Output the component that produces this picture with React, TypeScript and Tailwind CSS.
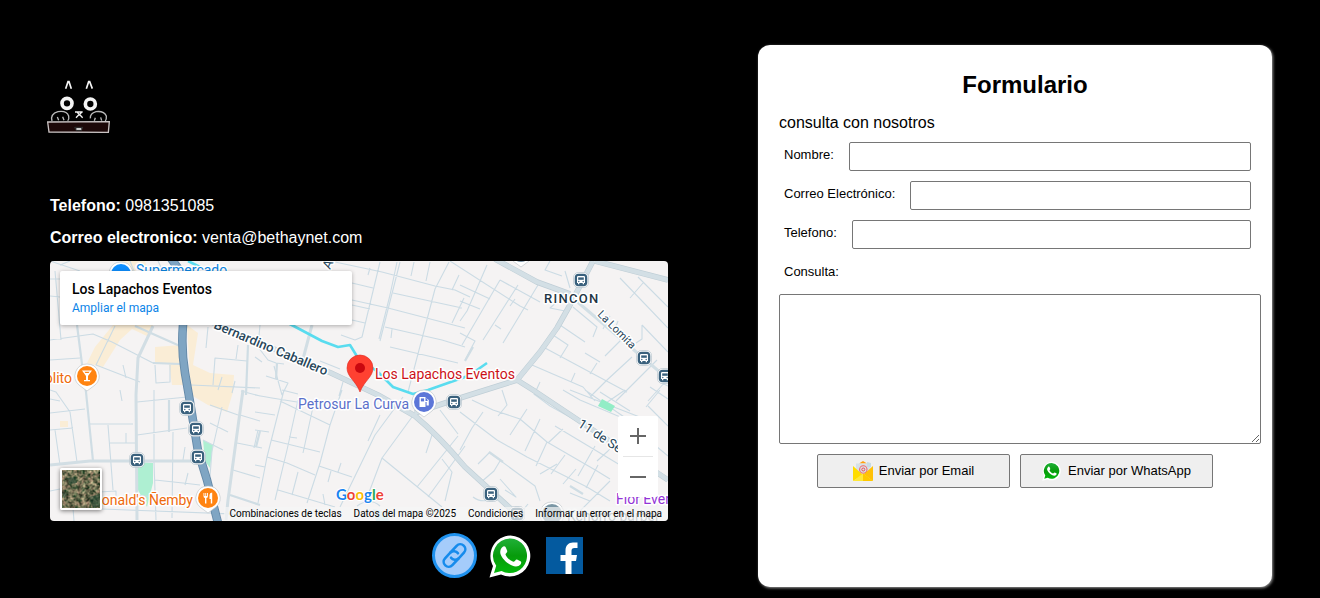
import React, { useState } from 'react';

interface Punto {
  x: number;
  y: number;
}

const PARADAS: Punto[] = [
  { x: 531, y: 19 },
  { x: 594, y: 97 },
  { x: 615, y: 115 },
  { x: 404, y: 141 },
  { x: 137, y: 147 },
  { x: 146, y: 168 },
  { x: 148, y: 196 },
  { x: 87, y: 199 },
  { x: 441, y: 233 },
  { x: 467, y: 253 },
];

const CALLES = [
  // oeste
  'M0 35L10 36M5 10L11 79M0 18H10M0 79L43 73L62 81L103 102L131 103M30 97L0 99M65 65L46 104L90 121M105 104L106 122L120 121V104M73 104L76 117',
  'M163 124L165 97L197 100M141 124L210 127M158 66L156 87M172 116L168 129M185 120L182 132M188 84L186 98M10 4L20 0M0 0L30 10M108 0L113 10M80 0L84 10',
  'M0 152L35 148M5 169L10 204M20 151L27 201M0 169L23 167M40 163H83M58 164L63 229M60 182H85M76 172V182M0 129L6 131L20 151M0 138L10 140',
  'M87 141L137 136M104 129V201L106 259M87 174L137 167M123 171L122 257M135 186L133 199M105 219L133 222L150 224M138 212L135 224M52 248L210 254M33 232L66 230V240',
  'M160 144L188 154M160 162L178 171M153 179L173 189M172 146L162 190L160 215M190 154L210 160M187 182L212 187M183 209L210 217M191 130L210 135M208 169L204 187',
  'M0 230L20 226M20 208L24 260M87 234L104 236M70 129L72 140',
  // centro
  'M285 1L332 11L385 25L405 29L420 36M330 1L312 76L305 79L291 74M350 1L330 80M347 1L340 34L329 78M364 1L361 15M380 1L376 20M399 1L385 28L358 131M302 22L323 27',
  'M302 39L338 47L415 67M302 44L320 48M302 59L315 62M343 32L412 47M335 66L392 79L415 86M340 86L408 102M414 37L402 62M409 14L402 29M342 68L341 77M320 7L318 14',
  'M210 64L208 86L218 99L226 102L234 103M216 115L238 122L232 134M224 105L232 134M232 129L248 133M205 96L212 101M293 121L289 135M270 100L290 108',
  'M234 129L217 196L208 242M248 139L237 189L225 239M263 146L253 192M292 129L280 164L270 202L257 242M330 154L318 180M353 136L325 174L290 246M362 156L332 197L315 242',
  'M205 134L222 137L247 141M205 151L225 154M230 140L280 164M205 169L219 171M221 179L270 191M269 205L302 216M217 196L237 202L265 214M205 204L215 206M228 229L285 246',
  'M332 197L392 246M248 211L242 234M291 202L288 211M281 210L278 221M239 176L247 177M390 149L408 173M408 175L367 226M415 185L378 236M382 174L376 192M392 198L402 211L395 240',
  'M273 233L275 244M307 245Q320 236 330 245',
  // este
  'M437 4L417 50L410 60M450 19L412 84M468 24L433 79M488 24L453 82M400 0L470 45L478 49M410 40L430 48M410 24L440 38M450 19L490 41M465 38L460 45M445 64L451 68M410 72L425 80L415 99',
  'M500 0L495 9L512 15M515 10L520 27M517 32L500 47L515 50M523 46L547 66L543 76M510 64L535 81M503 74L518 84L510 97M495 87L577 131M482 104L533 126L545 140',
  'M570 17L618 67M588 16L618 46M593 22L580 37M592 64L618 91M592 64V78L586 82M575 75L555 95M582 96L557 119L540 136M607 99L575 131L566 140M616 120L598 140M547 102L540 113M525 112L521 121',
  'M490 121L484 134M520 129L600 160M560 55L553 68M568 60L563 73M600 126L618 138M608 120L618 125M535 92L550 101M550 131L580 150',
  'M410 151L447 179L477 196L537 226L560 240M422 139L443 149L470 158L497 181L547 210L560 218M452 129L457 144L448 155M433 151L422 167L410 189M477 148L460 174M490 158L475 190M497 181L486 205',
  'M513 168L498 182M505 165L580 210M527 160L500 145L484 133M515 194L501 213M545 185L528 215M548 204L536 227M526 208L513 223M580 165L558 190L547 200M507 203L490 213',
  'M513 129L530 139L575 158M535 129L580 160M575 129L556 142M598 145L618 165M440 191L428 203M450 218L466 236L455 229M430 222L444 210L450 200M440 192L485 225L490 240M465 259L478 243M560 220L530 250',
  'M423 236Q432 243 445 237M540 240L520 232M600 180L618 195M610 129L596 146',
].join('');

function Marcador({ x, y, color, children }: Punto & { color: string; children?: React.ReactNode }) {
  return (
    <g transform={`translate(${x} ${y})`}>
      <path d="M0 -12A12 12 0 0 1 8 9L0 15L-8 9A12 12 0 0 1 0 -12Z" fill="#fff" stroke="#b9bfc4" strokeWidth=".6" />
      <circle r="10" fill={color} />
      {children}
    </g>
  );
}

function Parada({ x, y }: Punto) {
  return (
    <g transform={`translate(${x} ${y})`}>
      <rect x="-7.5" y="-7.5" width="15" height="15" rx="5" fill="#fff" stroke="#aab8c2" strokeWidth=".6" />
      <rect x="-6.3" y="-6.3" width="12.6" height="12.6" rx="4" fill="#3a617d" />
      <path d="M-4 -2.8Q-4 -4 -2.8 -4H2.8Q4 -4 4 -2.8V3H3V4.2H1.7V3H-1.7V4.2H-3V3H-4Z" fill="#fff" />
      <rect x="-2.8" y="-2.6" width="5.6" height="2.4" fill="#3a617d" />
      <circle cx="-2.2" cy="1.5" r=".7" fill="#3a617d" />
      <circle cx="2.2" cy="1.5" r=".7" fill="#3a617d" />
    </g>
  );
}

function Mapa() {
  return (
    <svg viewBox="0 0 618 260" preserveAspectRatio="xMidYMid slice" className="block h-full w-full font-[Roboto,sans-serif]" role="img" aria-label="Mapa de Los Lapachos Eventos">
      <rect width="618" height="260" fill="#f5f3f3" />

      <g fill="#faedd6">
        <path d="M63 64H103L99 76L82 68L70 79L53 106L37 102L45 86Z" />
        <path d="M105 86L131 84L137 124H122L119 103L105 102Z" />
        <path d="M137 64L148 72L143 104L160 112L184 114L183 131L177 151L158 144L141 134Z" />
        <path d="M10 160h8v6h-8zM70 0H95L98 10H74Z" />
      </g>
      <g fill="#aeefd2">
        <path d="M88 201L103 202V222L97 246L88 229Z" />
        <path d="M153 179L163 184L160 207L155 200Z" />
      </g>
      <path d="M323 248L332 250L340 260H326Z" fill="#c3eaf0" />

      <g fill="none" strokeLinejoin="round">
        <path d={CALLES} stroke="#cbdbe4" strokeWidth="1.1" />
        <path d="M27 64L33 111L36 131L43 200M85 65L130 85M119 139V171M180 234L210 244M198 84L196 134M103 102L131 103M227 102L226 118M210 170L206 186M439 191L453 201M520 225L533 233M423 86L415 100" stroke="#cfdde4" strokeWidth="2.2" />
        <path d="M103 65L88 97L86 134L87 259M0 204L40 200H147M193 129L178 239L176 259M262 64L253 98" stroke="#d2dee4" strokeWidth="3" />
        <path d="M517 32L618 118" stroke="#d2dfe5" strokeWidth="3" />
        <path d="M150 56L205 80L281 112L328 134L365 155Q388 174 415 206L473 259M445 -2L487 21L520 33M543 0L520 44L507 67L490 91L467 119L410 137L365 152M545 0L618 19M467 119L483 129L618 219" stroke="#bfced6" strokeWidth="5.6" />
        <path d="M150 56L205 80L281 112L328 134L365 155Q388 174 415 206L473 259M445 -2L487 21L520 33M543 0L520 44L507 67L490 91L467 119L410 137L365 152M545 0L618 19M467 119L483 129L618 219" stroke="#d3dfe5" strokeWidth="4.4" />
        <path d="M138 0L150 6M238 62L272 80L288 86L300 84L308 97L328 111L343 126L363 133L378 129L415 116L427 109L437 102" stroke="#59dcef" strokeWidth="2.6" />
        <path d="M120 -4L133 14V64Q131 88 135 112L139 135L148 190L157 219L168 262" stroke="#6489a8" strokeWidth="8.6" />
        <path d="M120 -4L133 14V64Q131 88 135 112L139 135L148 190L157 219L168 262" stroke="#7fa5c3" strokeWidth="6.8" />
      </g>
      <path d="M552 138L565 145L561 151L548 145Z" fill="#92edc6" />

      {PARADAS.map((parada) => (
        <Parada key={`${parada.x}-${parada.y}`} {...parada} />
      ))}

      <Marcador x={71} y={13} color="#0f8fff" />
      <Marcador x={471} y={-9} color="#7b93a5" />
      <Marcador x={502} y={253} color="#7b97a5" />
      <Marcador x={37} y={115} color="#ff8412">
        <path d="M-5 -5.5H5L1 0V4H3V5.3H-3V4H-1V0ZM-2.6 -4.2L-1.6 -2.9H1.6L2.6 -4.2Z" fill="#fff" fillRule="evenodd" />
      </Marcador>
      <Marcador x={158} y={237} color="#ff8412">
        <path d="M-4.5 -5V-2Q-4.5 0 -3 0V5.5H-1.6V0Q0 0 0 -2V-5H-.9V-2H-1.8V-5H-2.7V-2H-3.6V-5ZM1.5 -3Q1.5 -5 4.2 -5.4V5.5H2.8V1H1.5Z" fill="#fff" />
      </Marcador>
      <Marcador x={374} y={141} color="#5c76d8">
        <path d="M-4.5 5V-5H1.5V5ZM2 -4L4.8 -2V3.5H2.6V0H1.5V-1H3.6V-2Z" fill="#fff" />
        <rect x="-3.1" y="-3.6" width="3.2" height="3" fill="#5c76d8" />
      </Marcador>

      <g stroke="#fff" strokeWidth="3" strokeLinejoin="round" className="text-[14px] [paint-order:stroke]">
        <text x="86" y="14" fill="#0b84e0">Supermercado</text>
        <text x="22" y="122" textAnchor="end" fill="#ee6a0c">Bolito</text>
        <text x="143" y="244" textAnchor="end" fill="#ee6a0c">McDonald's Ñemby</text>
        <text x="325" y="118" fill="#cc1218">Los Lapachos Eventos</text>
        <text x="248" y="148" fill="#5b70ca">Petrosur La Curva</text>
        <text x="566" y="243" fill="#9334d6">Flor Eventos</text>
        <text x="517" y="260" fill="#6f7f88">Kchorro barber</text>
        <g fill="#27465a" className="text-[13px]">
          <text transform="translate(163 67) rotate(23)" className="font-medium">Bernardino Caballero</text>
          <text transform="translate(527 165) rotate(33)">11 de Setiem</text>
          <text transform="translate(280 9) rotate(-65)">Av</text>
          <text transform="translate(547 54) rotate(45)" className="text-[11px]">La Lomita</text>
          <text x="494" y="42" fill="#1f3644" className="font-medium tracking-widest">RINCON</text>
        </g>
      </g>

      <path d="M310 94A13 13 0 0 1 323 107C323 116 314 120 310 131C306 120 297 116 297 107A13 13 0 0 1 310 94Z" fill="#ff4131" stroke="#dd2c24" strokeWidth=".6" />
      <circle cx="310" cy="107" r="5" fill="#c9080f" />

      <text x="286" y="239" stroke="#fff" strokeWidth="2" className="font-[Lato,sans-serif] text-[15px] font-bold [paint-order:stroke]">
        <tspan fill="#1a84f0">G</tspan>
        <tspan fill="#ee4235">o</tspan>
        <tspan fill="#fbbc05">o</tspan>
        <tspan fill="#1a84f0">g</tspan>
        <tspan fill="#26a852">l</tspan>
        <tspan fill="#ee4235">e</tspan>
      </text>
    </svg>
  );
}

function LogoGato() {
  return (
    <svg viewBox="51 45 189 162" className="h-[54px] w-[63px]" fill="none" stroke="#f4f4f4" role="img" aria-label="Bethaynet">
      <path d="M107 71L114 50H117L124 71M169 71L176 50H179L187 71" strokeWidth="5" />
      <circle cx="111" cy="115" r="15" strokeWidth="11" />
      <circle cx="181" cy="117" r="15" strokeWidth="11" />
      <path d="M135 141H158M142 142L148 149L155 142M148 148L138 158M148 148L158 158" strokeWidth="4" />
      <path d="M66 168Q60 147 84 140Q110 136 116 153Q118 162 113 167M82 156L86 166M98 155L102 166M181 160Q180 145 198 140Q222 137 229 153Q230 162 226 168M196 158L193 167M212 157L215 167" strokeWidth="4" stroke="#b9b9b9" />
      <path d="M53 171L238 170L235 202L57 201Z" fill="#1c0808" strokeWidth="4" stroke="#c9c3c3" />
      <path d="M134 187H158L154 197H139Z" fill="#080808" stroke="#444" strokeWidth="2" />
      <path d="M139 192H154" strokeWidth="5" />
    </svg>
  );
}

function IconoWhatsApp({ id, className }: { id: string; className: string }) {
  return (
    <svg viewBox="0 0 44 44" className={className} aria-hidden="true">
      <defs>
        <linearGradient id={id} x1="0" y1="0" x2="0" y2="1">
          <stop offset="0" stopColor="#20b038" />
          <stop offset=".5" stopColor="#079b0b" />
          <stop offset="1" stopColor="#04b70b" />
        </linearGradient>
      </defs>
      <path d="M21.5 1.5A20.5 20.5 0 1 1 12 40.5L.5 43.5L4 32A20.5 20.5 0 0 1 21.5 1.5Z" fill="#fff" />
      <path d="M21.5 4.5A17.3 17.3 0 1 1 12.5 37L5 39L7.2 31.7A17.3 17.3 0 0 1 21.5 4.5Z" fill={`url(#${id})`} />
      <path d="M13.5 13C14.5 12 16.2 12.1 16.8 13.5L18.2 16.8C18.7 18.2 16.5 19.5 16.5 20.5C17.2 23 20.5 26.5 24.3 27.7C25.5 27.9 26.9 25 28 25.5L31.5 27.2C32.7 27.8 32.2 29.5 31.5 30.5C29.5 32.8 26.2 33 23 31.5C18 29.5 13 24.5 11.5 20C10.8 17.5 11.5 14.7 13.5 13Z" fill="#fff" />
    </svg>
  );
}

function IconoEnlace() {
  return (
    <svg viewBox="0 0 45 45" className="h-[45px] w-[45px]" fill="none" aria-hidden="true">
      <circle cx="22.5" cy="22.5" r="21" fill="#a5ccfb" stroke="#1e91ee" strokeWidth="3" />
      <g transform="rotate(-47 22.5 22.5)" stroke="#168bec" strokeWidth="2.6" strokeLinecap="round">
        <path d="M23 27.5H14A5 5 0 0 1 14 17.5H22A5 5 0 0 1 26.5 23.5" />
        <path d="M22 17.5H31A5 5 0 0 1 31 27.5H23A5 5 0 0 1 18.5 21.5" />
      </g>
    </svg>
  );
}

function IconoFacebook() {
  return (
    <svg viewBox="0 0 38 38" className="h-[38px] w-[38px]" aria-hidden="true">
      <rect x="1" width="37" height="37" fill="#045a9f" />
      <path d="M20.5 37V24H15.5V18H20.5V13.5C20.5 8.5 23.5 5.5 28 5.5H32.5V11H29.5C27.3 11 26.5 12 26.5 14V18H32L31 24H26.5V37Z" fill="#fff" />
    </svg>
  );
}

function IconoEmail() {
  return (
    <svg viewBox="0 0 20 20" className="h-5 w-5" aria-hidden="true">
      <path d="M6 2.5L10 0L14 2.5Z" fill="#ff9f0f" />
      <path d="M3 2.5H14L17.5 5.5V14H3Z" fill="#d6e1e8" />
      <path d="M14 1L18 2V6H14Z" fill="#c7dbe3" />
      <circle cx="10.3" cy="8.5" r="3.7" fill="none" stroke="#f3686b" strokeWidth="1.1" />
      <circle cx="10.3" cy="8.5" r="1.5" fill="none" stroke="#ee4a4e" strokeWidth="1" />
      <path d="M0 5L10 14L0 20Z" fill="#ffdc00" />
      <path d="M20 5L10 14L20 20Z" fill="#ffc107" />
      <path d="M0 20L10 12.5L20 20Z" fill="#ffe83a" />
      <path d="M10 12.5L20 20H10Z" fill="#ffc800" />
    </svg>
  );
}

function Satelite() {
  return (
    <svg viewBox="0 0 38 38" className="block h-full w-full" aria-hidden="true">
      <filter id="terreno" x="0" y="0" width="1" height="1" colorInterpolationFilters="sRGB">
        <feTurbulence type="fractalNoise" baseFrequency=".25" numOctaves="4" seed="7" />
        <feColorMatrix values="1.2 0 0 0 -.17  .9 .2 0 0 -.12  .8 .1 0 0 -.13  0 0 0 0 1" />
      </filter>
      <rect width="38" height="38" filter="url(#terreno)" />
      <path d="M5 8L13 7L15 13L8 14ZM27 27L38 24V36L31 38ZM0 22L5 24L2 29Z" fill="#123d2b" opacity=".5" />
    </svg>
  );
}

const CAMPOS = [
  { id: 'nombre', etiqueta: 'Nombre:', tipo: 'text' },
  { id: 'correo', etiqueta: 'Correo Electrónico:', tipo: 'email' },
  { id: 'telefono', etiqueta: 'Telefono:', tipo: 'tel' },
];

export default function App() {
  const [datos, setDatos] = useState<Record<string, string>>({});

  const handleChange = (e: React.ChangeEvent<HTMLInputElement | HTMLTextAreaElement>) => {
    setDatos({ ...datos, [e.target.name]: e.target.value });
  };

  return (
    <div className="min-h-screen bg-black font-['Liberation_Sans',Arial,sans-serif] text-black">
      <div className="grid grid-cols-[618fr_514fr] items-start gap-[90px] pr-12 pl-[50px]">
        <section className="pt-20 text-base leading-6 text-white">
          <div className="-ml-[3px] mb-[60px]">
            <LogoGato />
          </div>
          <p><strong>Telefono:</strong> 0981351085</p>
          <p className="mt-2"><strong>Correo electronico:</strong> venta@bethaynet.com</p>

          <div className="relative mt-[11px] h-[260px] overflow-hidden rounded font-[Roboto,sans-serif]">
            <Mapa />
            <div className="absolute top-[10px] left-[10px] w-[292px] rounded-[2px] bg-white px-3 pt-2 pb-2 shadow-[0_1px_4px_rgba(0,0,0,0.3)]">
              <p className="text-[14px] leading-5 font-medium text-black">Los Lapachos Eventos</p>
              <a href="#mapa" className="block text-[12px] leading-[18px] text-[#0b84e8]">Ampliar el mapa</a>
            </div>
            <button type="button" aria-label="Mostrar imágenes satelitales" className="absolute bottom-[11px] left-[10px] h-[42px] w-[42px] overflow-hidden rounded-[2px] border-2 border-white shadow-[0_1px_4px_rgba(0,0,0,0.5)]">
              <Satelite />
            </button>
            <div className="absolute right-[10px] bottom-6 flex w-10 flex-col items-center rounded-[2px] bg-white">
              <button type="button" aria-label="Acercar" className="flex h-10 w-10 items-center justify-center">
                <svg viewBox="0 0 18 18" className="h-[18px] w-[18px]" fill="#666" aria-hidden="true"><path d="M8 1H10V8H17V10H10V17H8V10H1V8H8Z" /></svg>
              </button>
              <span className="h-px w-[30px] bg-[#e6e6e6]" />
              <button type="button" aria-label="Alejar" className="flex h-10 w-10 items-center justify-center">
                <svg viewBox="0 0 18 18" className="h-[18px] w-[18px]" fill="#666" aria-hidden="true"><path d="M1 8H17V10H1Z" /></svg>
              </button>
            </div>
            <div className="absolute right-0 bottom-0 flex gap-3 bg-[#f5f5f5]/70 px-[6px] text-[10px] leading-[14px] whitespace-nowrap text-black">
              <button type="button">Combinaciones de teclas</button>
              <span>Datos del mapa ©2025</span>
              <a href="#condiciones">Condiciones</a>
              <a href="#informar">Informar un error en el mapa</a>
            </div>
          </div>

          <div className="mt-3 flex items-center justify-end gap-3 pr-[85px]">
            <a href="#enlace" aria-label="Enlace"><IconoEnlace /></a>
            <a href="#whatsapp" aria-label="WhatsApp"><IconoWhatsApp id="verde-redes" className="h-11 w-11" /></a>
            <a href="#facebook" aria-label="Facebook"><IconoFacebook /></a>
          </div>
        </section>

        <form onSubmit={(e) => e.preventDefault()} className="mt-[45px] rounded-[12px] bg-white px-[21px] pt-[26px] pb-[99px] shadow-[1px_1px_3px_rgba(255,255,255,0.6)]">
          <h2 className="pl-5 text-center text-[24px] leading-7 font-bold">Formulario</h2>
          <p className="mt-[15px] mb-[10px] text-base leading-[18px]">consulta con nosotros</p>
          <div className="flex flex-col gap-[10px]">
            {CAMPOS.map((campo) => (
              <div key={campo.id} className="flex items-start gap-[10px]">
                <label htmlFor={campo.id} className="p-[5px] text-[13px] leading-[15px] whitespace-nowrap">{campo.etiqueta}</label>
                <input id={campo.id} name={campo.id} type={campo.tipo} value={datos[campo.id] || ''} onChange={handleChange} className="h-[29px] min-w-0 flex-1 rounded-[2px] border border-[#767676] bg-white px-1 text-[13px]" />
              </div>
            ))}
            <label htmlFor="consulta" className="p-[5px] text-[13px] leading-[15px]">Consulta:</label>
            <div className="-mr-[10px]">
              <textarea id="consulta" name="consulta" value={datos.consulta || ''} onChange={handleChange} className="block h-[150px] w-full resize rounded-[2px] border border-[#767676] bg-white p-1 text-[13px]" />
            </div>
            <div className="flex justify-center gap-[10px] text-[13px]">
              <button type="submit" className="flex h-[34px] w-[193px] items-center justify-center gap-[6px] rounded-[2px] border border-[#767676] bg-[#efefef]">
                <IconoEmail /> Enviar por Email
              </button>
              <button type="button" className="flex h-[34px] w-[193px] items-center justify-center gap-[6px] rounded-[2px] border border-[#767676] bg-[#efefef]">
                <IconoWhatsApp id="verde-boton" className="h-5 w-5" /> Enviar por WhatsApp
              </button>
            </div>
          </div>
        </form>
      </div>
    </div>
  );
}
